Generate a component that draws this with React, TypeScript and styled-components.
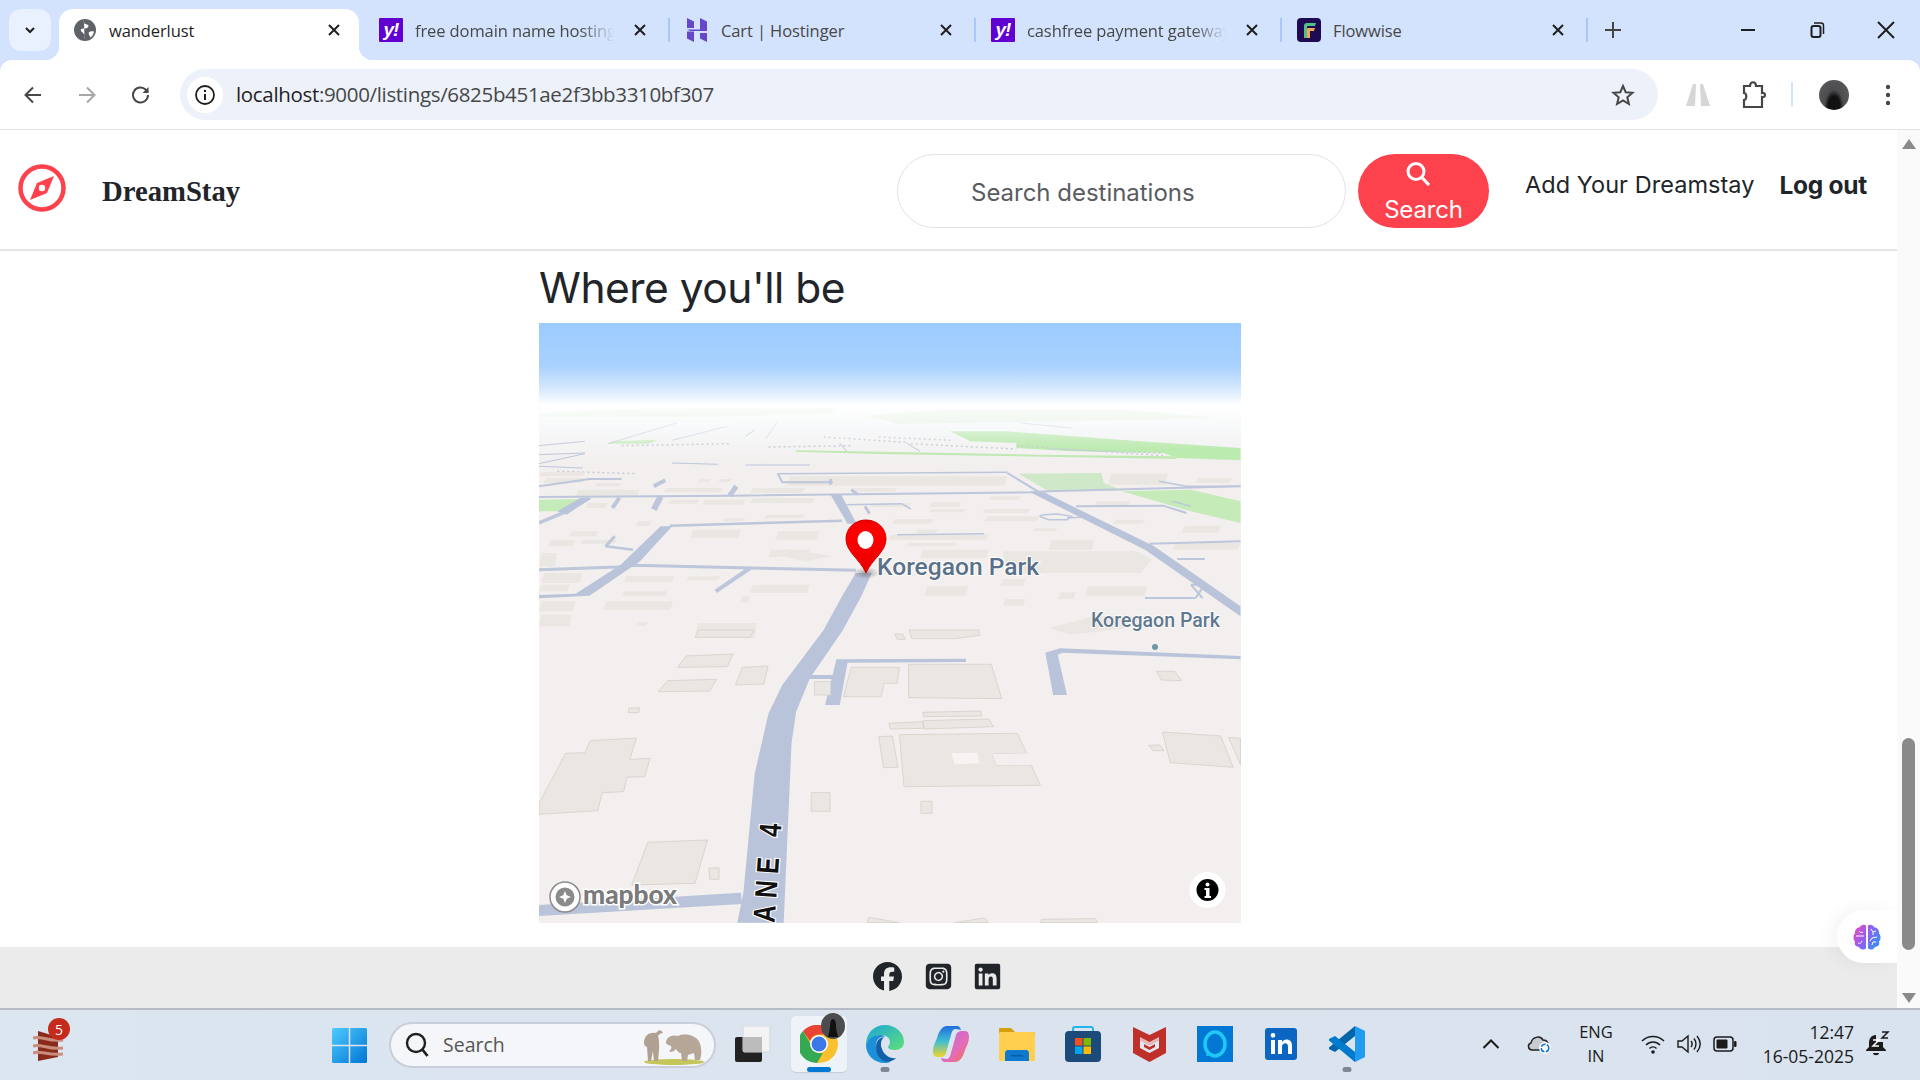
import * as React from 'react';
import styled, { createGlobalStyle } from 'styled-components';
import { FaFacebook, FaLinkedin, FaSquareInstagram } from 'react-icons/fa6';

const GlobalStyle = createGlobalStyle`
    html, body {
        margin: 0;
        padding: 0;
        background: #fff;
        overflow: hidden;
    }
    * {
        box-sizing: border-box;
    }
`;

const Screen = styled.div`
    width: 1920px;
    height: 1080px;
    display: flex;
    flex-direction: column;
    overflow: hidden;
    font-family: "Open Sans", "Liberation Sans", sans-serif;
`;

/* ---------- browser chrome ---------- */

const TabStrip = styled.div`
    height: 60px;
    flex: none;
    display: flex;
    background: #d3e3fd;
    padding-left: 9px;
`;

const TabListButton = styled.div`
    width: 42px;
    height: 42px;
    margin: 9px 6px 0 0;
    flex: none;
    border-radius: 12px;
    background: #e9f0fe;
    display: flex;
    align-items: center;
    justify-content: center;
`;

const TabSlot = styled.div<{ $active?: boolean; $sep?: boolean }>`
    position: relative;
    width: 306px;
    flex: none;
    display: flex;
    align-items: center;
    padding-left: 16px;
    color: ${(p) => (p.$active ? '#1f1f1f' : '#474747')};
    font-size: 16.5px;
    letter-spacing: -0.1px;
    &::after {
        content: '';
        display: ${(p) => (p.$sep ? 'block' : 'none')};
        position: absolute;
        right: -1px;
        top: 18px;
        height: 24px;
        width: 2px;
        background: #a8c7fa;
    }
`;

const ActiveTabShape = styled.div`
    position: absolute;
    left: 2px;
    right: 4px;
    top: 9px;
    bottom: 0;
    background: #fff;
    border-radius: 14px 14px 0 0;
    &::before,
    &::after {
        content: '';
        position: absolute;
        bottom: 0;
        width: 14px;
        height: 14px;
    }
    &::before {
        left: -14px;
        background: radial-gradient(circle at 0 0, transparent 14px, #fff 14.5px);
    }
    &::after {
        right: -14px;
        background: radial-gradient(circle at 100% 0, transparent 14px, #fff 14.5px);
    }
`;

const Favicon = styled.div<{ $bg?: string }>`
    position: relative;
    width: 24px;
    height: 24px;
    flex: none;
    border-radius: 1px;
    background: ${(p) => p.$bg || 'transparent'};
    display: flex;
    align-items: center;
    justify-content: center;
    color: #fff;
    font: italic 700 19px "Liberation Sans", sans-serif;
    letter-spacing: -1px;
    svg {
        display: block;
    }
`;

const TabTitle = styled.div<{ $fade?: boolean }>`
    position: relative;
    margin-left: 12px;
    width: 199px;
    white-space: nowrap;
    overflow: hidden;
    ${(p) =>
        p.$fade &&
        `-webkit-mask-image: linear-gradient(90deg, #000 165px, transparent 199px);
         mask-image: linear-gradient(90deg, #000 165px, transparent 199px);`}
`;

const TabClose = styled.div`
    position: absolute;
    left: 268px;
    top: 21px;
    width: 18px;
    height: 18px;
`;

const NewTab = styled.div`
    width: 52px;
    display: flex;
    align-items: center;
    justify-content: center;
`;

const WindowControls = styled.div`
    margin-left: auto;
    display: flex;
    align-items: center;
`;

const WindowButton = styled.div`
    width: 69px;
    display: flex;
    justify-content: center;
`;

const Toolbar = styled.div`
    height: 70px;
    flex: none;
    background: #d3e3fd;
`;

const ToolbarInner = styled.div`
    height: 70px;
    background: #fff;
    border-radius: 12px 12px 0 0;
    border-bottom: 1px solid #e3e3e3;
    display: flex;
    align-items: flex-start;
    padding: 9px 0 0 3px;
`;

const NavIcon = styled.div<{ $w: number }>`
    width: ${(p) => p.$w}px;
    height: 51px;
    flex: none;
    display: flex;
    align-items: center;
    justify-content: center;
`;

const AddressBar = styled.div`
    width: 1478px;
    height: 51px;
    flex: none;
    margin-left: 9px;
    background: #edf2fa;
    border-radius: 26px;
    display: flex;
    align-items: center;
    padding-left: 7px;
    padding-right: 23px;
`;

const SiteInfo = styled.div`
    width: 36px;
    height: 36px;
    border-radius: 50%;
    background: #fff;
    display: flex;
    align-items: center;
    justify-content: center;
    flex: none;
`;

const UrlText = styled.div`
    margin: -2px 0 0 13px;
    font-size: 20.5px;
    letter-spacing: -0.33px;
    color: #474747;
    span {
        color: #1f1f1f;
    }
`;

const Star = styled.div`
    margin-left: auto;
    display: flex;
`;

const ToolbarDivider = styled.div`
    width: 2px;
    height: 24px;
    background: #d3e3fd;
    margin: 13px 0 0 21px;
    flex: none;
`;

const Avatar = styled.div`
    width: 30px;
    height: 30px;
    border-radius: 50%;
    background: radial-gradient(ellipse at 50% 90%, #111 0 28%, #4d4d50 45%, #5d5d60 100%);
`;

/* ---------- page ---------- */

const Viewport = styled.div`
    position: relative;
    flex: 1;
    display: flex;
    min-height: 0;
`;

const Page = styled.div`
    flex: 1;
    display: flex;
    flex-direction: column;
    background: #fff;
`;

const Navbar = styled.nav`
    height: 121px;
    flex: none;
    border-bottom: 2px solid #e4e4e4;
    display: flex;
    align-items: flex-start;
    padding-left: 18px;
`;

const BrandMark = styled.div`
    width: 48px;
    height: 48px;
    margin-top: 34px;
    flex: none;
`;

const BrandName = styled.div`
    margin: 45px 0 0 36px;
    font: 700 28.7px "Liberation Serif", serif;
    color: #212529;
    width: 795px;
`;

const SearchInput = styled.div`
    width: 449px;
    height: 74px;
    margin-top: 24px;
    flex: none;
    border: 1.5px solid #e2e2e2;
    border-radius: 37px;
    padding: 2px 0 0 73px;
    display: flex;
    align-items: center;
    font: 400 24px "Inter", sans-serif;
    letter-spacing: -0.02px;
    color: #595c5f;
`;

const SearchButton = styled.div`
    width: 131px;
    height: 74px;
    margin: 24px 0 0 12px;
    flex: none;
    background: #fe424d;
    border-radius: 37px / 37px;
    color: #fff;
    display: flex;
    flex-direction: column;
    align-items: center;
    font: 400 24px/30px "Inter", sans-serif;
    letter-spacing: -0.15px;
    padding-top: 7px;
    svg {
        margin-left: -12px;
    }
    div {
        margin-top: 8px;
    }
`;

const NavLink = styled.div<{ $bold?: boolean; $ml: number }>`
    margin: 40px 0 0 ${(p) => p.$ml}px;
    font: ${(p) => (p.$bold ? 700 : 400)} ${(p) => (p.$bold ? 24.5 : 23.5)}px "Inter", sans-serif;
    letter-spacing: ${(p) => (p.$bold ? '-0.3px' : '0.05px')};
    color: #212529;
    white-space: nowrap;
`;

const Main = styled.main`
    flex: 1;
    padding-left: 539px;
    display: flex;
    flex-direction: column;
`;

const Heading = styled.h2`
    margin: 0;
    height: 72px;
    font: 400 42.5px/73px "Inter", sans-serif;
    letter-spacing: -0.5px;
    color: #212529;
`;

const MapFrame = styled.div`
    width: 702px;
    height: 600px;
    overflow: hidden;
    svg {
        display: block;
    }
`;

const Footer = styled.footer`
    height: 61px;
    flex: none;
    background: #ebebeb;
    display: flex;
    align-items: center;
    padding: 0 0 2px 873px;
    svg {
        display: block;
    }
`;

const SocialLink = styled.a<{ $ml?: number }>`
    margin-left: ${(p) => p.$ml || 0}px;
    font-size: 29px;
    display: block;
    color: #212529;
`;

const FloatWidget = styled.div`
    position: absolute;
    right: 23px;
    top: 780px;
    width: 60px;
    height: 53px;
    background: #fff;
    border-radius: 27px 0 0 27px;
    box-shadow: -6px 0 18px rgba(0, 0, 0, 0.05);
    display: flex;
    align-items: center;
    padding-left: 16px;
`;

const Scrollbar = styled.div`
    position: relative;
    width: 23px;
    flex: none;
    background: #fafafa;
`;

const ScrollArrow = styled.div<{ $down?: boolean }>`
    position: absolute;
    left: 5px;
    ${(p) => (p.$down ? 'bottom: 5px;' : 'top: 9px;')}
    width: 0;
    height: 0;
    border-left: 7px solid transparent;
    border-right: 7px solid transparent;
    ${(p) => (p.$down ? 'border-top: 10px solid #8a8a8a;' : 'border-bottom: 10px solid #8a8a8a;')}
`;

const ScrollThumb = styled.div`
    position: absolute;
    left: 5px;
    top: 608px;
    width: 13px;
    height: 212px;
    background: #8a8a8a;
    border-radius: 7px;
`;

/* ---------- taskbar ---------- */

const Taskbar = styled.div`
    height: 72px;
    flex: none;
    background: linear-gradient(90deg, #dbe6f1, #dbe3ee 50%, #d9e3ef);
    border-top: 2px solid #b5bcc5;
    display: flex;
    align-items: center;
    position: relative;
    color: #1b1b1b;
`;

const WidgetSlot = styled.div`
    width: 332px;
    padding-left: 33px;
    flex: none;
    margin-top: -4px;
`;

const WidgetIcon = styled.div`
    position: relative;
    width: 31px;
    height: 36px;
`;

const Badge = styled.div`
    position: absolute;
    left: 15px;
    top: -7px;
    width: 22px;
    height: 22px;
    border-radius: 50%;
    background: #c42b1c;
    color: #fff;
    font-size: 14px;
    display: flex;
    align-items: center;
    justify-content: center;
`;

const StartButton = styled.div`
    width: 35px;
    margin-right: 22px;
    flex: none;
    svg {
        display: block;
    }
`;

const TaskSearch = styled.div`
    position: relative;
    width: 327px;
    height: 46px;
    flex: none;
    margin-right: 4px;
    background: #f4f6fa;
    border: 2px solid #c9cedb;
    border-radius: 23px;
    display: flex;
    align-items: center;
    padding-left: 14px;
    font-size: 19.5px;
    color: #555;
    span {
        margin: -2px 0 0 14px;
    }
`;

const Elephants = styled.div`
    position: absolute;
    right: 8px;
    top: 5px;
`;

const TaskSlot = styled.div`
    position: relative;
    width: 66px;
    height: 70px;
    flex: none;
    display: flex;
    align-items: center;
    justify-content: center;
    padding-bottom: 2px;
`;

const ActiveTile = styled.div`
    position: absolute;
    left: 5px;
    top: 6px;
    width: 56px;
    height: 56px;
    background: #edf3f9;
    border-radius: 5px;
    box-shadow: 0 1px 1px rgba(0, 0, 0, 0.1);
`;

const ChromeMark = styled.div`
    position: relative;
    display: flex;
`;

const ProfileBadge = styled.div`
    position: absolute;
    left: 35px;
    top: 3px;
    display: flex;
`;

const RunDot = styled.div<{ $active?: boolean }>`
    position: absolute;
    left: 50%;
    bottom: 8px;
    transform: translateX(-50%);
    width: ${(p) => (p.$active ? 24 : 9)}px;
    height: 5px;
    border-radius: 3px;
    background: ${(p) => (p.$active ? '#0078d4' : '#7d8791')};
`;

const Tray = styled.div`
    position: absolute;
    left: 1467px;
    top: 0;
    bottom: 0;
    display: flex;
    align-items: center;
`;

const TraySlot = styled.div<{ $w: number }>`
    width: ${(p) => p.$w}px;
    flex: none;
    display: flex;
    justify-content: center;
    margin-top: -2px;
`;

const LangBox = styled.div`
    font-size: 16.5px;
    line-height: 24px;
    text-align: center;
`;

const Clock = styled.div`
    width: 105px;
    flex: none;
    text-align: right;
    font-size: 17.5px;
    line-height: 24px;
    margin-top: -2px;
`;

/* ---------- small drawings ---------- */

const CloseIcon = ({ size = 18 }: { size?: number }) => (
    <svg width={size} height={size} viewBox="0 0 18 18">
        <path d="M4 4l10 10M14 4L4 14" stroke="#1f1f1f" strokeWidth="2" fill="none" />
    </svg>
);

const GlobeIcon = () => (
    <svg width="24" height="24" viewBox="0 0 24 24">
        <circle cx="12" cy="12" r="11" fill="#5f6368" />
        <path d="M11 3c-1 2 1 3 3 3.500s2 2.500 0 3.500-5 0-6 1.500 2 3 3 4.500-.5 3 .5 5M16 14c2-1 3-1 5-.5-.5 2.500-1.500 4.500-3.500 6-1-2-2.500-3.500-1.500-5.500z" fill="#fff" />
    </svg>
);

const HostingerIcon = () => (
    <svg width="24" height="24" viewBox="0 0 24 24">
        <path d="M2 0l7 3.500V10H2z" fill="#6747c7" />
        <path d="M15 0l7 3.500V13H5l-3-1.500h13z" fill="#6747c7" />
        <path d="M2 13.500h7V19.500H2zM2 13.500h7V24l-7-3.500z" fill="#6747c7" />
        <path d="M15 15h7v9l-7-3.500z" fill="#6747c7" />
    </svg>
);

const FlowwiseIcon = () => (
    <svg width="24" height="24" viewBox="0 0 24 24">
        <rect width="24" height="24" rx="4" fill="#1e0b52" />
        <path d="M7 20V8c0-2 1-3 3-3h9l-1 3h-7c-1 0-1 1-1 2v10z" fill="#4fc28a" />
        <path d="M10 20v-9c0-1 0-1 1-1h7l-1 3h-4v7z" fill="#f2a65a" />
    </svg>
);

const ChromeLogo = () => (
    <svg width="38" height="38" viewBox="0 0 38 38">
        <circle cx="19" cy="19" r="19" fill="#fbc02d" />
        <path d="M19 0a19 19 0 0 1 16.500 9.500H19a9.500 9.500 0 0 0-9 6.500L3 6a19 19 0 0 1 16-6z" fill="#ea4335" />
        <path d="M3 6l8.500 14.500A9.500 9.500 0 0 0 23 28l-6 10A19 19 0 0 1 3 6z" fill="#34a853" />
        <circle cx="19" cy="19" r="9" fill="#fff" />
        <circle cx="19" cy="19" r="7.500" fill="#3b78e7" />
    </svg>
);

const EdgeLogo = () => (
    <svg width="38" height="38" viewBox="0 0 38 38">
        <defs>
            <linearGradient id="edgeTop" x1="0" y1="0" x2="1" y2="1">
                <stop offset="0" stopColor="#1aa7d8" />
                <stop offset="1" stopColor="#5fe07a" />
            </linearGradient>
        </defs>
        <path d="M19 0c11 0 19 8 19 17 0 5-4 8-9 8-4 0-7-1-7-3 0-1 2-2 2-5 0-4-4-7-9-7C8 10 2 14 0 20 0 8 8 0 19 0z" fill="url(#edgeTop)" />
        <path d="M0 20c2-7 8-10 14-10 2 0 4 .5 5 1.500-7 0-10 5-9 11 1 7 7 13 15 14-2 1-4 1.500-6 1.500C8 38 0 30 0 20z" fill="#1b8fd8" />
        <path d="M10 22c0-6 3-9 8-10-3 3-4 7-2 12 2 6 8 10 14 9-3 3-7 4-10 3.500C14 35 10 30 10 22z" fill="#125fa8" />
    </svg>
);

const CopilotLogo = () => (
    <svg width="36" height="38" viewBox="0 0 36 38">
        <defs>
            <linearGradient id="copA" x1="0" y1="0" x2="0" y2="1">
                <stop offset="0" stopColor="#1f6de0" />
                <stop offset=".5" stopColor="#3fc0d0" />
                <stop offset="1" stopColor="#f5d328" />
            </linearGradient>
            <linearGradient id="copB" x1="0" y1="0" x2="1" y2="1">
                <stop offset="0" stopColor="#b46be0" />
                <stop offset=".6" stopColor="#e46cb8" />
                <stop offset="1" stopColor="#f5733c" />
            </linearGradient>
        </defs>
        <path d="M14 1h10c2 0 3 1 4 4l-5-1c-3 0-4 2-5 6l-5 18c-1 3-3 4-6 4H4c-3 0-4-3-4-6 0-5 2-8 4-13C6 6 9 1 14 1z" fill="url(#copA)" />
        <path d="M22 37H12c-2 0-3-1-4-4l5 1c3 0 4-2 5-6l5-18c1-3 3-4 6-4h3c3 0 4 3 4 6 0 5-2 8-4 13-2 7-5 12-10 12z" fill="url(#copB)" />
    </svg>
);

const FolderLogo = () => (
    <svg width="36" height="33" viewBox="0 0 36 33">
        <path d="M1 0h11l4 4h19c.500 0 1 .500 1 1v4H0V1c0-.500.500-1 1-1z" fill="#d69f0c" />
        <rect y="4" width="36" height="29" rx="1.500" fill="#ffcf4d" />
        <path d="M6 33v-8c0-1.500 1-3 3-3h18c2 0 3 1.500 3 3v8z" fill="#0f79cf" />
        <rect x="12" y="27" width="12" height="1.500" fill="#0a5ba3" />
    </svg>
);

const StoreLogo = () => (
    <svg width="36" height="36" viewBox="0 0 36 36">
        <path d="M8 6V3c0-1 1-2 2-2h16c1 0 2 1 2 2v3" fill="none" stroke="#22b5ee" strokeWidth="2" />
        <rect y="5" width="36" height="31" rx="4" fill="#1c4a7a" />
        <rect x="10" y="12" width="7.500" height="7.500" fill="#f25022" />
        <rect x="18.500" y="12" width="7.500" height="7.500" fill="#7fba00" />
        <rect x="10" y="20.500" width="7.500" height="7.500" fill="#00a4ef" />
        <rect x="18.500" y="20.500" width="7.500" height="7.500" fill="#ffb900" />
    </svg>
);

const McAfeeLogo = () => (
    <svg width="33" height="36" viewBox="0 0 33 36">
        <path d="M0 1l16.500 8L33 1v26l-16.500 9L0 27z" fill="#c0302b" />
        <path d="M7 11l9.500 5 9.500-5v3l-9.500 5L7 14z" fill="#e8b9b6" />
        <path d="M7 14l9.500 5 9.500-5v8l-9.500 5L7 22z" fill="#dfe7f0" />
        <path d="M11 18l5.500 3 5.500-3v3l-5.500 3-5.500-3z" fill="#c0302b" />
    </svg>
);

const AlexaLogo = () => (
    <svg width="36" height="36" viewBox="0 0 36 36">
        <rect width="36" height="36" fill="#0078d4" />
        <ellipse cx="18" cy="18" rx="10" ry="12" fill="none" stroke="#1fc8f5" strokeWidth="3.500" />
        <path d="M10 25l-1 5 6-1z" fill="#1fc8f5" />
    </svg>
);

const LinkedInTile = () => (
    <svg width="32" height="32" viewBox="0 0 32 32">
        <rect width="32" height="32" rx="3" fill="#0a66c2" />
        <path d="M6 12h4v14H6zM8 5a2.300 2.300 0 1 1 0 4.700A2.300 2.300 0 0 1 8 5zM13 12h4v2c1-1.500 2.500-2.400 4.500-2.400 3.500 0 5.500 2.200 5.500 6V26h-4v-7.500c0-2-.8-3.300-2.600-3.300-1.900 0-3.400 1.300-3.400 3.500V26h-4z" fill="#fff" />
    </svg>
);

const VSCodeLogo = () => (
    <svg width="36" height="36" viewBox="0 0 36 36">
        <path d="M26 0l10 5v26l-10 5-16-15.500L26 26V10z" fill="#1f9cf0" />
        <path d="M26 0v10L6 26l-6-3v-1.500L26 0z" fill="#0065a9" />
        <path d="M0 14.500V13l6-3 20 16v10z" fill="#007acc" />
    </svg>
);

const BrainIcon = () => (
    <svg width="28" height="26" viewBox="0 0 28 26">
        <defs>
            <linearGradient id="brainFill" x1="0" y1="0" x2="1" y2="0.600">
                <stop offset="0" stopColor="#f646b4" />
                <stop offset=".5" stopColor="#9a5cf0" />
                <stop offset="1" stopColor="#3f8cf5" />
            </linearGradient>
        </defs>
        <path d="M13 1.500V24.500c-2.500 2-6 1-7-1.500-3.500 0-5-3-4-5.500C0 16 0 11 2 9.500 1.500 6 4 3.500 6.500 3.500 8 .5 11.500 0 13 1.500zM15 1.500c1.500-1.500 5-1 6.500 2 2.500 0 5 2.500 4.500 6 2 1.500 2 6.500 0 8 1 2.500-.5 5.500-4 5.500-1 2.500-4.500 3.500-7 1.500z" fill="url(#brainFill)" />
        <path d="M3 12h8M5 19c2 1 3 0 4-2M6 7c1 2 3 2 4 1M18 5l2 3 3-1M20 8v3M24 13l-5 1-2 3M19 21l1-3 3 0" stroke="#fff" strokeWidth="1" fill="none" />
    </svg>
);

/* ---------- the map ---------- */

// traced from the reference: z5 is the upper half of the map, z6 the lower half
const GREENS: [string, string][] = [
    ['20,282 200,268 660,265 665,280 400,292 20,292', '#eaf7e8'],
    ['730,288 900,270 1300,270 1500,295 1300,302 800,312', '#e6f5e2'],
    ['915,335 1040,335 1330,365 1548,385 1548,422 1410,415 1380,400 1180,395 1060,385 1060,370 960,365', '#bcebb0'],
    ['580,392 1000,402 1100,405 1400,410 1410,418 1000,408 760,403 580,396', '#bfe8b2'],
    ['1065,462 1245,460 1250,490 1290,512 1130,515', '#cfe9c8'],
    ['1290,515 1440,510 1548,545 1548,610 1440,575', '#c4ebb8'],
    ['20,540 110,538 70,575 20,575', '#c4ebb8'],
    ['180,365 280,360 260,372 170,372', '#cdeec6']
];

const Z5_BUILDINGS = [
    [25, 760, 115, 790], [20, 795, 88, 815], [20, 845, 100, 875], [20, 885, 92, 920],
    [205, 770, 315, 788], [340, 770, 415, 782], [200, 815, 300, 830], [160, 845, 312, 870],
    [360, 910, 495, 955], [230, 908, 258, 918], [480, 795, 610, 820], [458, 830, 480, 848],
    [350, 630, 460, 655], [535, 635, 630, 660], [520, 690, 610, 712], [860, 800, 955, 828],
    [1025, 778, 1080, 798], [1030, 838, 1080, 858], [1150, 818, 1190, 838], [1210, 800, 1345, 830],
    [840, 630, 890, 640], [780, 645, 1000, 660], [820, 670, 930, 680], [850, 690, 1000, 715],
    [1130, 660, 1230, 690], [990, 590, 1110, 605], [790, 598, 880, 612], [1095, 625, 1150, 635],
    [1270, 600, 1340, 612], [1420, 618, 1505, 640], [1400, 670, 1548, 690], [740, 550, 830, 562],
    [870, 548, 940, 562], [870, 568, 950, 578], [1000, 530, 1070, 540], [985, 568, 1090, 580],
    [230, 605, 265, 620], [85, 635, 150, 650], [40, 660, 100, 680], [110, 660, 190, 672],
    [365, 478, 395, 488], [410, 478, 440, 488], [480, 505, 600, 520], [375, 540, 470, 555],
    [480, 535, 620, 550], [100, 510, 240, 528], [140, 490, 200, 500], [510, 585, 600, 596],
    [20, 700, 60, 740], [560, 470, 1040, 498], [30, 475, 120, 490], [420, 595, 470, 605],
    [120, 550, 170, 565], [300, 540, 370, 552], [290, 505, 420, 518], [20, 458, 120, 470],
    [1260, 462, 1390, 495], [1450, 475, 1530, 490], [1230, 545, 1310, 556], [700, 505, 800, 516]
];

const Z5_LOTS = [
    '1030,695 1320,695 1355,720 1330,760 1040,760',
    '520,700 565,688 660,710 600,725',
    '1130,925 1230,890 1340,890 1300,925 1180,945'
];

// far away houses read as a speckle of dots
const Z5_SPECKLE = [
    '760,352 920,362',
    '830,372 1060,388',
    '1060,378 1380,408',
    '640,352 820,368',
    '200,378 440,372',
    '520,382 700,378',
    '1130,388 1380,400',
    '60,455 230,462'
];

const Z6_BUILDINGS = [
    '360,22 368,0 488,0 480,22',
    '322,112 340,78 443,72 430,110',
    '280,185 300,152 407,148 392,183',
    '448,165 463,112 519,108 510,162',
    '215,235 239,233 237,248 215,248',
    '20,553 20,520 78,370 120,368 132,332 232,324 218,388 262,385 250,440 212,442 204,485 158,488 148,542',
    '222,765 257,637 387,630 360,760',
    '390,715 412,713 412,748 392,748',
    '613,488 654,488 654,544 613,544',
    '852,514 876,514 876,550 852,550',
    '620,155 655,155 655,195 620,195',
    '683,200 700,112 805,112 800,160 772,160 765,200',
    '825,103 1005,103 1028,206 825,203',
    '856,247 982,243 985,258 858,260',
    '782,280 855,275 858,295 785,297',
    '856,272 1000,267 1010,290 860,297',
    '760,320 790,318 802,412 770,413',
    '805,314 1062,310 1082,370 1008,372 1016,406 1092,405 1112,466 815,470',
    '1378,306 1505,318 1532,412 1395,398',
    '1348,346 1372,345 1382,362 1358,362',
    '1522,322 1548,325 1548,405',
    '1365,124 1405,124 1420,152 1375,150',
    '735,878 738,862 805,878',
    '925,878 990,864 1000,878',
    '1112,878 1115,868 1232,866 1236,878',
    '795,12 812,12 818,28 800,28',
    '832,26 826,0 978,0 980,16 925,26'
];

const Z5_THIN_ROADS: [string, number][] = [
    ['20,750 190,742 230,737 480,745 710,752', 3],
    ['305,618 680,603', 2.5],
    ['20,610 80,575 130,535', 3.5],
    ['20,532 440,528 1090,518 1130,515 1548,500', 2],
    ['1040,460 1110,518', 2],
    ['540,462 1040,458', 1.5],
    ['540,462 550,488 660,488', 2],
    ['655,478 655,495', 3],
    ['270,570 285,530', 6],
    ['180,565 195,535', 4],
    ['435,528 450,500', 5],
    ['270,500 295,482', 4],
    ['405,815 480,745', 4],
    ['165,680 185,650', 3],
    ['165,680 225,690', 2.5],
    ['1350,672 1548,665', 2],
    ['1190,560 1380,558 1430,580', 2],
    ['1440,795 1470,795 1450,835 1340,835', 2],
    ['1440,795 1465,835', 2],
    ['1410,718 1470,718', 2],
    ['800,645 990,642', 1.5],
    ['700,510 715,525', 3],
    ['730,560 740,582', 3],
    ['690,555 810,552 830,568', 1.5],
    ['1110,590 1130,600 1170,600 1180,590 1150,583 1120,585 1110,590', 1.5],
    ['1170,595 1210,592', 1.5],
    ['20,500 130,478 200,478', 2],
    ['20,440 115,445', 1],
    ['20,432 120,402', 1],
    ['20,405 120,400', 1],
    ['310,430 410,434', 1],
    ['470,436 610,436', 1],
    ['20,378 120,365', 1],
    ['170,372 320,310', 0.7],
    ['310,362 430,320', 0.7],
    ['470,350 490,330', 1],
    ['515,355 540,305', 0.7],
    ['675,370 690,395', 1],
    ['820,370 850,395', 1],
    ['1370,485 1430,500 1548,500', 1.5],
    ['1400,545 1440,560', 1.5],
    ['1070,310 1180,325', 0.7]
];

const Z5_ROAD_FILLS = [
    '655,525 678,525 712,612 692,612',
    '100,822 198,735 285,620 310,620 240,725 130,828 20,836 20,826',
    '1090,518 1120,518 1360,680 1548,860 1548,890 1340,690',
    '710,760 745,760 722,830 682,931 640,931 680,830',
    '60,575 110,535 135,535 80,585'
];

const Z6_ROAD_FILLS = [
    '640,0 682,0 610,145 580,245 570,340 553,878 452,878 465,790 490,430 520,250 550,165',
    '668,88 950,86 950,96 692,98 675,225 643,225',
    '610,135 660,135 660,147 610,147',
    '1123,68 1155,55 1548,78 1548,88 1160,68 1150,75 1170,195 1140,195',
    '20,825 460,788 462,822 20,858'
];

const MapDrawing = () => (
    <svg width="702" height="600" viewBox="0 0 702 600">
        <defs>
            <linearGradient id="sky" x1="0" y1="0" x2="0" y2="1">
                <stop offset="0" stopColor="#9bcbff" />
                <stop offset=".52" stopColor="#a8d1fe" />
                <stop offset=".78" stopColor="#d2e7fc" />
                <stop offset="1" stopColor="#ffffff" />
            </linearGradient>
            <linearGradient id="haze" x1="0" y1="0" x2="0" y2="1">
                <stop offset="0" stopColor="#ffffff" />
                <stop offset=".4" stopColor="#f7f9fa" />
                <stop offset="1" stopColor="#f2efee" stopOpacity="1" />
            </linearGradient>
            <linearGradient id="hazeOver" x1="0" y1="0" x2="0" y2="1">
                <stop offset="0" stopColor="#ffffff" stopOpacity=".8" />
                <stop offset=".6" stopColor="#f7f8f9" stopOpacity=".45" />
                <stop offset="1" stopColor="#f2efee" stopOpacity="0" />
            </linearGradient>
            <linearGradient id="pinFill" x1="0" y1="0" x2="0" y2="1">
                <stop offset="0" stopColor="#f00000" />
                <stop offset=".2" stopColor="#ff0000" />
                <stop offset="1" stopColor="#e80000" />
            </linearGradient>
            <radialGradient id="pinShadow">
                <stop offset="0" stopColor="#555" stopOpacity=".5" />
                <stop offset="1" stopColor="#555" stopOpacity="0" />
            </radialGradient>
        </defs>
        <rect width="702" height="600" fill="#f2efee" />
        <rect width="702" height="82" fill="url(#sky)" />
        <rect y="82" width="702" height="58" fill="url(#haze)" />

        {/* upper half, z5 coordinates */}
        <g transform="translate(-9.180,-3.330) scale(0.4591,0.3333)">
            {GREENS.map(([points, fill]) => (
                <polygon key={points} points={points} fill={fill} />
            ))}
            {Z5_SPECKLE.map((points) => (
                <polyline
                    key={points}
                    points={points}
                    fill="none"
                    stroke="#c7ccd6"
                    strokeWidth="1.500"
                    strokeDasharray="2 3"
                    vectorEffect="non-scaling-stroke"
                />
            ))}
            {Z5_LOTS.map((points) => (
                <polygon key={points} points={points} fill="#eae7e2" />
            ))}
            {Z5_BUILDINGS.map(([x1, y1, x2, y2]) => (
                <polygon
                    key={`${x1}-${y1}`}
                    points={`${x1 + 6},${y1} ${x2},${y1} ${x2 - 6},${y2} ${x1},${y2}`}
                    fill="#eae7e2"
                />
            ))}
            {Z5_THIN_ROADS.map(([points, width]) => (
                <polyline
                    key={points}
                    points={points}
                    fill="none"
                    stroke="#bdc6da"
                    strokeWidth={width}
                    vectorEffect="non-scaling-stroke"
                />
            ))}
            {Z5_ROAD_FILLS.map((points) => (
                <polygon key={points} points={points} fill="#b9c3d9" />
            ))}
        </g>

        {/* fade of the far distance */}
        <rect y="82" width="702" height="44" fill="url(#hazeOver)" />

        {/* lower half, z6 coordinates */}
        <g transform="translate(-9.180,307) scale(0.4591,0.3333)">
            {Z6_ROAD_FILLS.map((points) => (
                <polygon key={points} points={points} fill="#b9c3d9" />
            ))}
            {Z6_BUILDINGS.map((points) => (
                <polygon key={points} points={points} fill="#eae7e2" stroke="#d9d6d0" strokeWidth="1" vectorEffect="non-scaling-stroke" />
            ))}
            <polygon points="918,370 975,368 980,400 925,403" fill="#f6f3f2" />
            <polygon points="1008,372 1082,370 1092,405 1016,406" fill="#f2efee" />
        </g>

        <text
            transform="translate(243,494) rotate(-86) scale(0.78,1)"
            textAnchor="end"
            fontFamily='"Liberation Sans", sans-serif'
            fontWeight="700"
            fontSize="31"
            letterSpacing="9"
            fill="#111"
            stroke="#fff"
            strokeWidth="2.500"
            paintOrder="stroke"
        >
            LANE 4
        </text>

        <ellipse cx="327" cy="250" rx="13" ry="6" fill="url(#pinShadow)" />
        <path
            d="M327 250C321 236 307 229 307 216C307 205 316 197 327 197S347 205 347 216C347 229 333 236 327 250Z"
            fill="url(#pinFill)"
            stroke="#d40000"
            strokeWidth="1"
        />
        <ellipse cx="326.500" cy="217" rx="8" ry="9" fill="#fff" />

        <text
            x="338"
            y="252"
            fontFamily='"Roboto", sans-serif'
            fontWeight="500"
            fontSize="24"
            fill="#5a7189"
            stroke="#fff"
            strokeWidth="2"
            paintOrder="stroke"
            textLength="162"
            lengthAdjust="spacingAndGlyphs"
        >
            Koregaon Park
        </text>
        <text
            x="552"
            y="304"
            fontFamily='"Roboto", sans-serif'
            fontWeight="500"
            fontSize="20"
            fill="#5f7890"
            stroke="#fff"
            strokeWidth="1.500"
            paintOrder="stroke"
            textLength="129"
            lengthAdjust="spacingAndGlyphs"
        >
            Koregaon Park
        </text>
        <circle cx="616" cy="324" r="3" fill="#6f97ab" />

        {/* mapbox logo */}
        <circle cx="26" cy="574" r="15" fill="#fff" stroke="#8b8b8b" strokeWidth="1.500" />
        <circle cx="26" cy="574" r="9.500" fill="#8b8b8b" />
        <path d="M26 568l1.700 4.300 4.300 1.700-4.300 1.700-1.700 4.300-1.700-4.300-4.300-1.700 4.300-1.700z" fill="#fff" />
        <text
            x="44"
            y="581"
            fontFamily='"Lato", sans-serif'
            fontWeight="900"
            fontSize="26"
            fill="#7a7a7a"
            stroke="#fff"
            strokeWidth="3"
            paintOrder="stroke"
            textLength="94"
            lengthAdjust="spacingAndGlyphs"
        >
            mapbox
        </text>

        {/* attribution button */}
        <circle cx="668.500" cy="567" r="18" fill="#fff" />
        <circle cx="668.500" cy="567" r="11" fill="#000" />
        <circle cx="668.500" cy="561.500" r="2" fill="#fff" />
        <path d="M665.500 565h5v8h1.500v2h-6.500v-2h1.500v-6h-1.500z" fill="#fff" />
    </svg>
);

const TABS = [
    { title: 'free domain name hosting', fade: true, icon: 'yahoo' },
    { title: 'Cart | Hostinger', icon: 'hostinger' },
    { title: 'cashfree payment gateway', fade: true, icon: 'yahoo' },
    { title: 'Flowwise', icon: 'flowwise' }
];

const renderFavicon = (icon: string) => {
    if (icon === 'yahoo') return <Favicon $bg="#6001d2">y!</Favicon>;
    if (icon === 'hostinger') return <Favicon><HostingerIcon /></Favicon>;
    return <Favicon><FlowwiseIcon /></Favicon>;
};

export default function App() {
    return (
        <Screen>
            <GlobalStyle />
            <TabStrip>
                <TabListButton>
                    <svg width="14" height="14" viewBox="0 0 14 14">
                        <path d="M3 5l4 4 4-4" stroke="#1f1f1f" strokeWidth="2" fill="none" />
                    </svg>
                </TabListButton>
                <TabSlot $active>
                    <ActiveTabShape />
                    <Favicon><GlobeIcon /></Favicon>
                    <TabTitle>wanderlust</TabTitle>
                    <TabClose><CloseIcon /></TabClose>
                </TabSlot>
                {TABS.map((tab) => (
                    <TabSlot key={tab.title} $sep>
                        {renderFavicon(tab.icon)}
                        <TabTitle $fade={tab.fade}>{tab.title}</TabTitle>
                        <TabClose><CloseIcon /></TabClose>
                    </TabSlot>
                ))}
                <NewTab>
                    <svg width="18" height="18" viewBox="0 0 18 18">
                        <path d="M9 1v16M1 9h16" stroke="#444" strokeWidth="2" fill="none" />
                    </svg>
                </NewTab>
                <WindowControls>
                    <WindowButton>
                        <svg width="18" height="18" viewBox="0 0 18 18">
                            <path d="M2 9h14" stroke="#1f1f1f" strokeWidth="2" fill="none" />
                        </svg>
                    </WindowButton>
                    <WindowButton>
                        <svg width="18" height="18" viewBox="0 0 18 18">
                            <rect x="3.500" y="5" width="9" height="11" rx="2" stroke="#1f1f1f" strokeWidth="2" fill="none" />
                            <path d="M6 2h7c1.500 0 2.500 1 2.500 2.500V13" stroke="#1f1f1f" strokeWidth="1.500" fill="none" />
                        </svg>
                    </WindowButton>
                    <WindowButton>
                        <svg width="18" height="18" viewBox="0 0 18 18">
                            <path d="M1 1l16 16M17 1L1 17" stroke="#1f1f1f" strokeWidth="2" fill="none" />
                        </svg>
                    </WindowButton>
                </WindowControls>
            </TabStrip>

            <Toolbar>
                <ToolbarInner>
                    <NavIcon $w={60}>
                        <svg width="22" height="22" viewBox="0 0 22 22">
                            <path d="M19 11H4M11 3.500L3.500 11l7.500 7.500" stroke="#474747" strokeWidth="2" fill="none" />
                        </svg>
                    </NavIcon>
                    <NavIcon $w={48}>
                        <svg width="22" height="22" viewBox="0 0 22 22">
                            <path d="M3 11h15M11 3.500l7.500 7.500-7.500 7.500" stroke="#a6a6a6" strokeWidth="2" fill="none" />
                        </svg>
                    </NavIcon>
                    <NavIcon $w={60}>
                        <svg width="22" height="22" viewBox="0 0 22 22">
                            <path d="M18 11a7.500 7.500 0 1 1-2.200-5.300L18 8" stroke="#474747" strokeWidth="2" fill="none" />
                            <path d="M18.500 3v6h-6z" fill="#474747" />
                        </svg>
                    </NavIcon>
                    <AddressBar>
                        <SiteInfo>
                            <svg width="22" height="22" viewBox="0 0 22 22">
                                <circle cx="11" cy="11" r="9" stroke="#1f1f1f" strokeWidth="1.800" fill="none" />
                                <path d="M11 10v6" stroke="#1f1f1f" strokeWidth="2" />
                                <circle cx="11" cy="7" r="1.200" fill="#1f1f1f" />
                            </svg>
                        </SiteInfo>
                        <UrlText><span>localhost</span>:9000/listings/6825b451ae2f3bb3310bf307</UrlText>
                        <Star>
                            <svg width="24" height="24" viewBox="0 0 24 24">
                                <path d="M12 3l2.700 6.200 6.800.6-5.200 4.500 1.600 6.700L12 17.400 6.100 21l1.600-6.700-5.200-4.500 6.800-.6z" stroke="#474747" strokeWidth="2" fill="none" />
                            </svg>
                        </Star>
                    </AddressBar>
                    <NavIcon $w={80}>
                        <svg width="26" height="24" viewBox="0 0 26 24">
                            <path d="M8 1h3l-1 22H1zM15 1h3l7 22h-9z" fill="#d6d6d6" />
                        </svg>
                    </NavIcon>
                    <NavIcon $w={32}>
                        <svg width="26" height="30" viewBox="0 0 26 30">
                            <path d="M3 6h6c0-5 6-5 6 0h6v7c4-1 4 5 0 4v10H3v-7c3 0 3-7 0-7z" stroke="#474747" strokeWidth="2.200" fill="none" />
                        </svg>
                    </NavIcon>
                    <ToolbarDivider />
                    <NavIcon $w={82}><Avatar /></NavIcon>
                    <NavIcon $w={26}>
                        <svg width="6" height="24" viewBox="0 0 6 24">
                            <circle cx="3" cy="4" r="2.200" fill="#474747" />
                            <circle cx="3" cy="12" r="2.200" fill="#474747" />
                            <circle cx="3" cy="20" r="2.200" fill="#474747" />
                        </svg>
                    </NavIcon>
                </ToolbarInner>
            </Toolbar>

            <Viewport>
                <Page>
                    <Navbar>
                        <BrandMark>
                            <svg width="48" height="48" viewBox="0 0 48 48">
                                <circle cx="24" cy="24" r="21.500" stroke="#fe424d" strokeWidth="4.500" fill="none" />
                                <path d="M36 12L29 29 12 36l7-17z" fill="#fe424d" />
                                <circle cx="24" cy="24" r="3.200" fill="#fff" />
                            </svg>
                        </BrandMark>
                        <BrandName>DreamStay</BrandName>
                        <SearchInput>Search destinations</SearchInput>
                        <SearchButton>
                            <svg width="26" height="26" viewBox="0 0 26 26">
                                <circle cx="11" cy="10.500" r="8" stroke="#fff" strokeWidth="3" fill="none" />
                                <path d="M17 16.500l7 7.500" stroke="#fff" strokeWidth="3.200" />
                            </svg>
                            <div>Search</div>
                        </SearchButton>
                        <NavLink $ml={36}>Add Your Dreamstay</NavLink>
                        <NavLink $ml={25} $bold>Log out</NavLink>
                    </Navbar>
                    <Main>
                        <Heading>Where you'll be</Heading>
                        <MapFrame>
                            <MapDrawing />
                        </MapFrame>
                    </Main>
                    <Footer>
                        <SocialLink><FaFacebook /></SocialLink>
                        <SocialLink $ml={22}><FaSquareInstagram /></SocialLink>
                        <SocialLink $ml={20}><FaLinkedin /></SocialLink>
                    </Footer>
                </Page>
                <FloatWidget><BrainIcon /></FloatWidget>
                <Scrollbar>
                    <ScrollArrow />
                    <ScrollThumb />
                    <ScrollArrow $down />
                </Scrollbar>
            </Viewport>

            <Taskbar>
                <WidgetSlot>
                    <WidgetIcon>
                        <svg width="31" height="36" viewBox="0 0 31 36">
                            <path d="M5 6l20 6v20L5 36z" fill="#8a2a1a" />
                            <path d="M0 13c8-3 14 4 30 2M0 21c8-3 14 4 30 2M0 28c8-3 14 3 30 1" stroke="#c98d7c" strokeWidth="3" fill="none" />
                        </svg>
                        <Badge>5</Badge>
                    </WidgetIcon>
                </WidgetSlot>
                <StartButton>
                    <svg width="35" height="35" viewBox="0 0 35 35">
                        <defs>
                            <linearGradient id="winTile" x1="0" y1="0" x2="1" y2="1">
                                <stop offset="0" stopColor="#4fcbff" />
                                <stop offset="1" stopColor="#0075d3" />
                            </linearGradient>
                        </defs>
                        <rect width="35" height="35" rx="1.500" fill="url(#winTile)" />
                        <path d="M17.500 0v35M0 17.500h35" stroke="#dbe4ef" strokeWidth="1.500" />
                    </svg>
                </StartButton>
                <TaskSearch>
                    <svg width="24" height="26" viewBox="0 0 24 26">
                        <circle cx="11" cy="11" r="9" stroke="#1f1f1f" strokeWidth="2.400" fill="none" />
                        <path d="M17 17l5.500 7" stroke="#1f1f1f" strokeWidth="2.800" />
                    </svg>
                    <span>Search</span>
                    <Elephants>
                        <svg width="64" height="36" viewBox="0 0 64 36">
                            <ellipse cx="32" cy="33" rx="30" ry="3" fill="#c5c55a" />
                            <path d="M2 14C2 6 8 3 14 4c4-5 6-2 7 0-2 0-4 1-5 3 2 6 1 16 0 25h-4l-1-10-2 10H6l-1-14c-2-1-3-2-3-4z" fill="#b0a092" />
                            <path d="M24 14c0-6 6-9 12-7 6-3 16-1 20 4 4 5 4 14 2 20h-5l-1-7-6 2-1 6h-5l-1-8c-2 0-4-2-5-4-2 2-4 4-7 2 2-1 3-3 2-5-3-1-5-2-5-3z" fill="#b5a698" />
                        </svg>
                    </Elephants>
                </TaskSearch>
                <TaskSlot>
                    <svg width="36" height="36" viewBox="0 0 36 36">
                        <rect y="11" width="27" height="25" rx="2" fill="#222" />
                        <rect x="8" y="0" width="27" height="26" rx="1.500" fill="#f3f3f3" stroke="#d2d6dc" strokeWidth="1" />
                        <rect x="8" y="11" width="19" height="15" fill="#bcbcbc" />
                    </svg>
                </TaskSlot>
                <TaskSlot>
                    <ActiveTile />
                    <ChromeMark><ChromeLogo /></ChromeMark>
                    <ProfileBadge>
                        <svg width="24" height="26" viewBox="0 0 24 26">
                            <ellipse cx="12" cy="13" rx="12" ry="13" fill="#4c4c4f" />
                            <path d="M12 6c2 0 3 3 3 7 0 5 2 9 2 11H7c0-2 2-6 2-11 0-4 1-7 3-7z" fill="#111" />
                        </svg>
                    </ProfileBadge>
                    <RunDot $active />
                </TaskSlot>
                <TaskSlot><EdgeLogo /><RunDot /></TaskSlot>
                <TaskSlot><CopilotLogo /></TaskSlot>
                <TaskSlot><FolderLogo /></TaskSlot>
                <TaskSlot><StoreLogo /></TaskSlot>
                <TaskSlot><McAfeeLogo /></TaskSlot>
                <TaskSlot><AlexaLogo /></TaskSlot>
                <TaskSlot><LinkedInTile /></TaskSlot>
                <TaskSlot><VSCodeLogo /><RunDot /></TaskSlot>
                <Tray>
                    <TraySlot $w={48}>
                        <svg width="18" height="12" viewBox="0 0 18 12">
                            <path d="M1.500 10L9 2.500 16.500 10" stroke="#1b1b1b" strokeWidth="2" fill="none" />
                        </svg>
                    </TraySlot>
                    <TraySlot $w={48}>
                        <svg width="24" height="20" viewBox="0 0 24 20">
                            <path d="M5 16C1 16 0 10 4 9c1-6 9-8 12-3 4 0 5 3 5 5v5z" fill="#c8ccd2" stroke="#222" strokeWidth="1.500" />
                            <circle cx="18" cy="14" r="6" fill="#fff" />
                            <circle cx="18" cy="14" r="3.800" fill="none" stroke="#0a74d0" strokeWidth="1.500" strokeDasharray="5 1.500" />
                        </svg>
                    </TraySlot>
                    <TraySlot $w={66}>
                        <LangBox>ENG<br />IN</LangBox>
                    </TraySlot>
                    <TraySlot $w={48}>
                        <svg width="24" height="20" viewBox="0 0 24 20">
                            <path d="M1 7c6-6 16-6 22 0M5 11c4-4 10-4 14 0M8.500 14.500c2-2 5-2 7 0" stroke="#1b1b1b" strokeWidth="1.500" fill="none" />
                            <circle cx="12" cy="18" r="1.800" fill="#1b1b1b" />
                        </svg>
                    </TraySlot>
                    <TraySlot $w={24}>
                        <svg width="24" height="20" viewBox="0 0 24 20">
                            <path d="M1 7h4l6-5v16l-6-5H1z" stroke="#1b1b1b" strokeWidth="1.400" fill="none" />
                            <path d="M14 7c1.500 2 1.500 4 0 6M17 4.500c2.500 3.500 2.500 7.500 0 11M20 2c4 5 4 11 0 16" stroke="#1b1b1b" strokeWidth="1.400" fill="none" />
                        </svg>
                    </TraySlot>
                    <TraySlot $w={48}>
                        <svg width="24" height="16" viewBox="0 0 24 16">
                            <rect x="1" y="1" width="19" height="14" rx="3" stroke="#1b1b1b" strokeWidth="1.500" fill="none" />
                            <rect x="3.500" y="3.500" width="11" height="9" rx="1" fill="#1b1b1b" />
                            <rect x="21" y="5" width="2.500" height="6" rx="1" fill="#1b1b1b" />
                        </svg>
                    </TraySlot>
                    <Clock>12:47<br />16-05-2025</Clock>
                    <TraySlot $w={48}>
                        <svg width="24" height="26" viewBox="0 0 24 26">
                            <path d="M10 4c-5 0-7 4-7 8v4l-3 3v1h20v-1l-3-3v-5H10z" fill="#1b1b1b" />
                            <path d="M7 22h6c0 3-6 3-6 0z" fill="#1b1b1b" />
                            <path d="M7 9h6l-6 6h6" stroke="#fff" strokeWidth="1.500" fill="none" />
                            <path d="M16 1h6l-6 6h6" stroke="#1b1b1b" strokeWidth="1.500" fill="none" />
                        </svg>
                    </TraySlot>
                </Tray>
            </Taskbar>
        </Screen>
    );
}
